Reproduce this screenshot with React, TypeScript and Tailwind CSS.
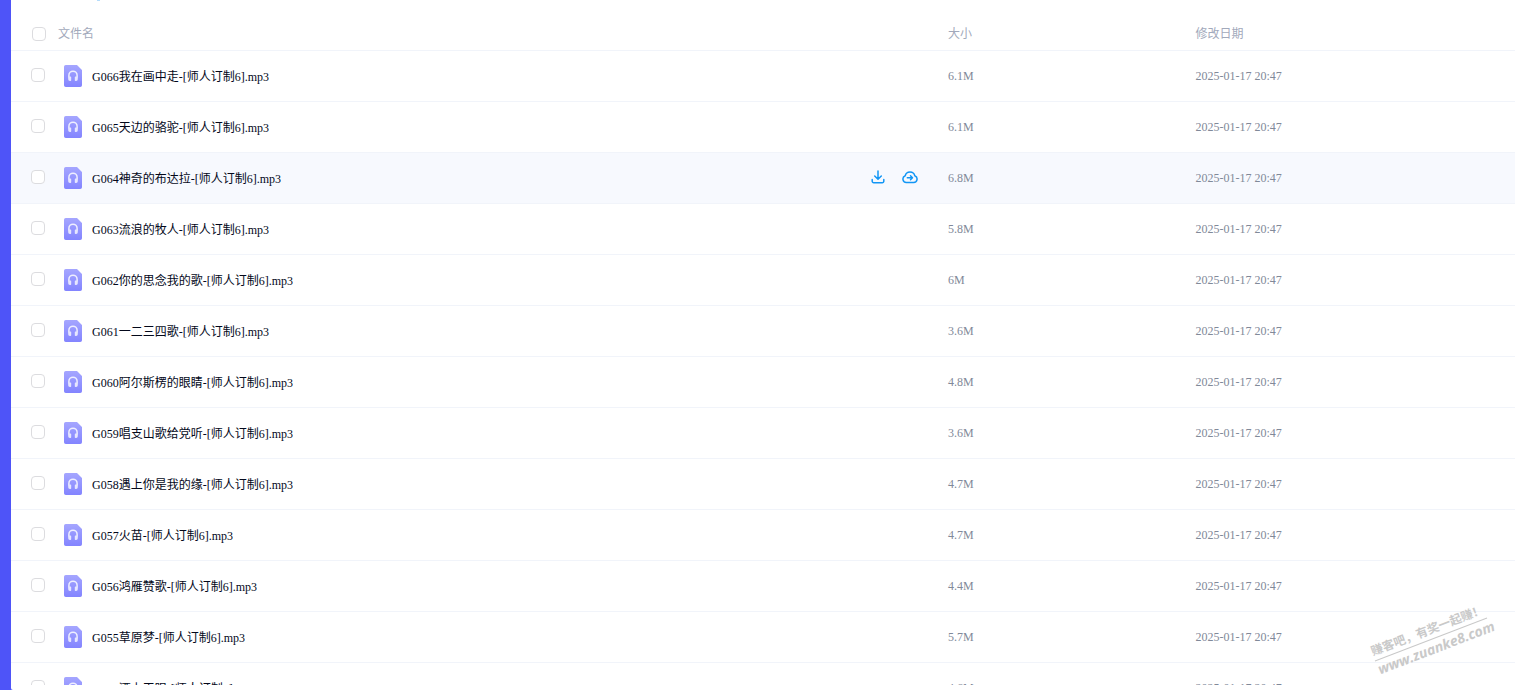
const FILES = [
  { name: "G066我在画中走-[师人订制6].mp3", size: "6.1M" },
  { name: "G065天边的骆驼-[师人订制6].mp3", size: "6.1M" },
  { name: "G064神奇的布达拉-[师人订制6].mp3", size: "6.8M", active: true },
  { name: "G063流浪的牧人-[师人订制6].mp3", size: "5.8M" },
  { name: "G062你的思念我的歌-[师人订制6].mp3", size: "6M" },
  { name: "G061一二三四歌-[师人订制6].mp3", size: "3.6M" },
  { name: "G060阿尔斯楞的眼睛-[师人订制6].mp3", size: "4.8M" },
  { name: "G059唱支山歌给党听-[师人订制6].mp3", size: "3.6M" },
  { name: "G058遇上你是我的缘-[师人订制6].mp3", size: "4.7M" },
  { name: "G057火苗-[师人订制6].mp3", size: "4.7M" },
  { name: "G056鸿雁赞歌-[师人订制6].mp3", size: "4.4M" },
  { name: "G055草原梦-[师人订制6].mp3", size: "5.7M" },
  { name: "G054酒上天眼-[师人订制6].mp3", size: "4.6M" },
];

const MODIFIED = "2025-01-17 20:47";

function Checkbox({ label }: { label: string }) {
  return (
    <input
      type="checkbox"
      aria-label={label}
      className="block size-[14px] shrink-0 appearance-none rounded border border-[#dcdcdf] bg-white checked:border-[#06a7ff] checked:bg-[#06a7ff]"
    />
  );
}

function AudioIcon() {
  return (
    <svg viewBox="0 0 18 22" className="h-[22px] w-[18px] shrink-0" aria-hidden="true">
      <defs>
        <linearGradient id="audio-bg" x1="0" y1="0" x2="0" y2="1">
          <stop offset="0" stopColor="#a5a6ff" />
          <stop offset="1" stopColor="#8384ff" />
        </linearGradient>
      </defs>
      <path d="M1.8 0H13l5 5v15.2a1.8 1.8 0 0 1-1.8 1.8H1.8A1.8 1.8 0 0 1 0 20.2V1.8A1.8 1.8 0 0 1 1.8 0Z" fill="url(#audio-bg)" />
      <path d="M4.900 12.500V10.300a4.100 4.100 0 0 1 8.200 0v2.200" fill="none" stroke="#eeeeff" strokeWidth="1.500" />
      <path d="M4.200 11.500h2.300a.7.7 0 0 1 .7.7v3a.7.7 0 0 1-.7.7h-.6a1.700 1.700 0 0 1-1.700-1.700ZM13.800 11.500h-2.300a.7.7 0 0 0-.7.7v3a.7.7 0 0 0 .7.7h.6a1.700 1.700 0 0 0 1.700-1.700Z" fill="#e6e6ff" />
    </svg>
  );
}

function DownloadIcon() {
  return (
    <svg viewBox="0 0 14 14" className="size-[14px]" fill="none" stroke="#1296f5" strokeWidth="1.5" strokeLinecap="round" strokeLinejoin="round" aria-hidden="true">
      <path d="M7 1v8M3.700 6 7 9.200 10.300 6M1.200 9.500v1.700a1.500 1.500 0 0 0 1.500 1.500h8.600a1.500 1.500 0 0 0 1.500-1.500V9.500" />
    </svg>
  );
}

function CloudIcon() {
  return (
    <svg viewBox="0 0 16 14" className="h-[14px] w-4" fill="none" stroke="#1296f5" strokeWidth="1.5" strokeLinecap="round" strokeLinejoin="round" aria-hidden="true">
      <path d="M4.300 12.400a3.400 3.400 0 0 1-1.100-6.600 4.900 4.900 0 0 1 9.600 0 3.400 3.400 0 0 1-1.100 6.600Z" />
      <path d="M5.300 7.700h5M8.500 5.700l2 2-2 2" />
    </svg>
  );
}

function Watermark() {
  return (
    <div
      aria-hidden="true"
      className="pointer-events-none absolute right-6 bottom-8 w-[120px] -rotate-[21deg] font-['Open_Sans','Noto_Sans_CJK_SC',sans-serif] font-bold whitespace-nowrap text-[#c9c9c9]"
    >
      <div className="border-b border-[#c9c9c9] text-xs leading-[18px]">赚客吧，有奖一起赚！</div>
      <div className="text-sm leading-[18px] italic">www.zuanke8.com</div>
    </div>
  );
}

export default function App() {
  return (
    <div className="relative flex h-screen overflow-hidden bg-[#4e54f8] pl-[11px] font-['Liberation_Serif','Noto_Sans_CJK_SC',serif] text-xs">
      <main className="flex min-w-0 flex-1 flex-col rounded-bl-[2px] bg-white pb-[5px]">
        <div className="min-h-0 flex-1 overflow-hidden">
          <div className="ml-[86px] h-px w-[3px] bg-[#b5dcfb]" />
          <table className="w-full table-fixed border-separate border-spacing-0 text-left">
            <thead className="text-[#a2a9bb]">
              <tr className="h-[50px] *:border-b *:border-[#f1f4fa] *:pt-4 *:font-normal">
                <th className="w-[62.3%] pl-[21px]">
                  <div className="flex items-center gap-3">
                    <Checkbox label="全选" />
                    文件名
                  </div>
                </th>
                <th className="w-[16.45%]">大小</th>
                <th>修改日期</th>
              </tr>
            </thead>
            <tbody className="text-[#818999]">
              {FILES.map(({ name, size, active }) => (
                <tr
                  key={name}
                  className={`h-[51px] *:border-b *:border-[#f1f4fa] ${active ? "bg-[#f7f9fe]" : ""}`}
                >
                  <td className="pl-5">
                    <div className="flex items-center">
                      <div className="pb-[2px]">
                        <Checkbox label={name} />
                      </div>
                      <div className="ml-[19px] flex min-w-0 flex-1 items-center gap-[10px]">
                        <AudioIcon />
                        <a href="#" className="truncate pt-[2px] text-[#03081a]">{name}</a>
                      </div>
                      {active && (
                        <div className="mr-[30px] flex items-center gap-[17px] pb-[3px]">
                          <button type="button" aria-label="下载">
                            <DownloadIcon />
                          </button>
                          <button type="button" aria-label="保存到网盘">
                            <CloudIcon />
                          </button>
                        </div>
                      )}
                    </div>
                  </td>
                  <td>{size}</td>
                  <td>{MODIFIED}</td>
                </tr>
              ))}
            </tbody>
          </table>
        </div>
      </main>
      <Watermark />
    </div>
  );
}
